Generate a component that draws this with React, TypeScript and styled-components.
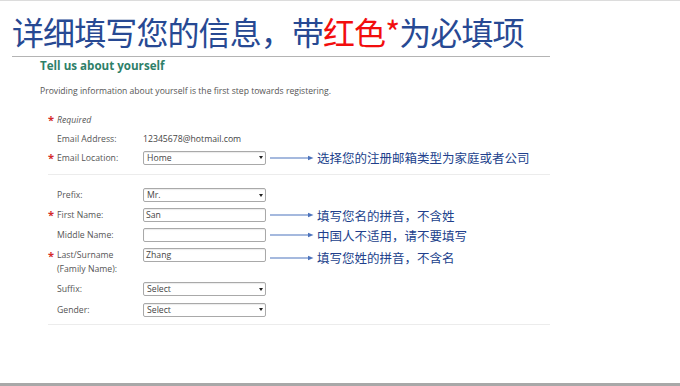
import React from "react";
import styled, { createGlobalStyle } from "styled-components";

const GlobalStyle = createGlobalStyle`
  html, body {
    margin: 0;
    padding: 0;
    background: #fff;
  }
  body {
    font-family: "Open Sans", "Noto Sans CJK SC", sans-serif;
  }
`;

const Page = styled.div`
  width: 680px;
  height: 386px;
  box-sizing: border-box;
  border-top: 1px solid #dcdcdc;
  border-bottom: 3px solid #a8a8a8;
  display: flex;
  flex-direction: column;
  overflow: hidden;
`;

const Title = styled.h1`
  margin: 10px 0 0 12px;
  font-family: "Noto Sans CJK SC", sans-serif;
  font-weight: 400;
  font-size: 32px;
  line-height: 40px;
  color: #274993;
  letter-spacing: -0.9px;
  white-space: nowrap;
`;

const Red = styled.span`
  color: #f20d0d;
`;

const TitleRule = styled.div`
  margin: 5px 0 0 12px;
  width: 538px;
  height: 1px;
  background: #b4b4b4;
`;

const Section = styled.section`
  padding-left: 40px;
  display: flex;
  flex-direction: column;
`;

const Heading = styled.h2`
  margin: 1px 0 0;
  font-size: 11.6px;
  line-height: 16px;
  font-weight: 700;
  color: #2e8069;
`;

const Intro = styled.p`
  margin: 11px 0 0;
  font-size: 8.6px;
  line-height: 12px;
  color: #555;
`;

const Form = styled.div`
  margin: 13px 0 0 8px;
  width: 502px;
  display: flex;
  flex-direction: column;
`;

const Row = styled.div<{ $h?: number; $top?: boolean }>`
  display: flex;
  align-items: ${(p) => (p.$top ? "flex-start" : "center")};
  height: ${(p) => p.$h ?? 20}px;
  padding-top: ${(p) => (p.$top ? 3 : 0)}px;
  box-sizing: border-box;
`;

const Star = styled.span`
  width: 9px;
  flex: none;
  color: #d42a2a;
  font-size: 11px;
  line-height: 16px;
  font-weight: 700;
`;

const Label = styled.span<{ $italic?: boolean }>`
  width: 86px;
  flex: none;
  font-size: 8.7px;
  line-height: 14px;
  color: #555;
  font-style: ${(p) => (p.$italic ? "italic" : "normal")};
`;

const Value = styled.span`
  font-size: 8.7px;
  line-height: 14px;
  color: #444;
`;

const Field = styled.div`
  width: 123px;
  height: 14px;
  flex: none;
  box-sizing: border-box;
  border: 1px solid #a9a9a9;
  border-radius: 2px;
  box-shadow: inset 0 1px 1px rgba(0, 0, 0, 0.08);
  background: #fff;
  display: flex;
  align-items: center;
  padding-left: 2px;
  font-size: 8.7px;
  color: #444;
`;

const SelectBox = styled(Field)`
  padding: 0 0 0 3px;
  justify-content: space-between;
`;

const Caret = styled.span`
  width: 9px;
  height: 100%;
  display: flex;
  align-items: center;
  justify-content: center;
  &::after {
    content: "";
    border-left: 2.5px solid transparent;
    border-right: 2.5px solid transparent;
    border-top: 3px solid #222;
  }
`;

const Note = styled.div`
  display: flex;
  align-items: center;
  margin-left: 4px;
  gap: 3px;
  font-family: "Noto Sans CJK SC", sans-serif;
  font-size: 12.5px;
  color: #213f8c;
  white-space: nowrap;
`;

const Divider = styled.div<{ $mt: number; $mb: number }>`
  height: 1px;
  background: #ececec;
  margin: ${(p) => p.$mt}px 0 ${(p) => p.$mb}px;
`;

function Arrow() {
  return (
    <svg width="44" height="6" viewBox="0 0 44 6">
      <line x1="0" y1="3" x2="39" y2="3" stroke="#4d74bd" strokeWidth="1.1" />
      <path d="M38 0.8 L43.5 3 L38 5.2 Z" fill="#4d74bd" />
    </svg>
  );
}

function Select({ value }: { value: string }) {
  return (
    <SelectBox>
      <span>{value}</span>
      <Caret />
    </SelectBox>
  );
}

function Hint({ text }: { text: string }) {
  return (
    <Note>
      <Arrow />
      <span>{text}</span>
    </Note>
  );
}

export default function App() {
  return (
    <>
      <GlobalStyle />
      <Page>
        <Title>
          详细填写您的信息，带<Red>红色*</Red>为必填项
        </Title>
        <TitleRule />
        <Section>
          <Heading>Tell us about yourself</Heading>
          <Intro>
            Providing information about yourself is the first step towards
            registering.
          </Intro>
          <Form>
            <Row $h={19}>
              <Star>*</Star>
              <Label $italic>Required</Label>
            </Row>
            <Row $h={19}>
              <Star />
              <Label>Email Address:</Label>
              <Value>12345678@hotmail.com</Value>
            </Row>
            <Row $h={19}>
              <Star>*</Star>
              <Label>Email Location:</Label>
              <Select value="Home" />
              <Hint text="选择您的注册邮箱类型为家庭或者公司" />
            </Row>
            <Divider $mt={7} $mb={10} />
            <Row>
              <Star />
              <Label>Prefix:</Label>
              <Select value="Mr." />
            </Row>
            <Row>
              <Star>*</Star>
              <Label>First Name:</Label>
              <Field>San</Field>
              <Hint text="填写您名的拼音，不含姓" />
            </Row>
            <Row>
              <Star />
              <Label>Middle Name:</Label>
              <Field />
              <Hint text="中国人不适用，请不要填写" />
            </Row>
            <Row $h={34} $top>
              <Star>*</Star>
              <Label>
                Last/Surname
                <br />
                (Family Name):
              </Label>
              <Field>Zhang</Field>
              <Hint text="填写您姓的拼音，不含名" />
            </Row>
            <Row>
              <Star />
              <Label>Suffix:</Label>
              <Select value="Select" />
            </Row>
            <Row $h={21}>
              <Star />
              <Label>Gender:</Label>
              <Select value="Select" />
            </Row>
            <Divider $mt={4} $mb={0} />
          </Form>
        </Section>
      </Page>
    </>
  );
}
